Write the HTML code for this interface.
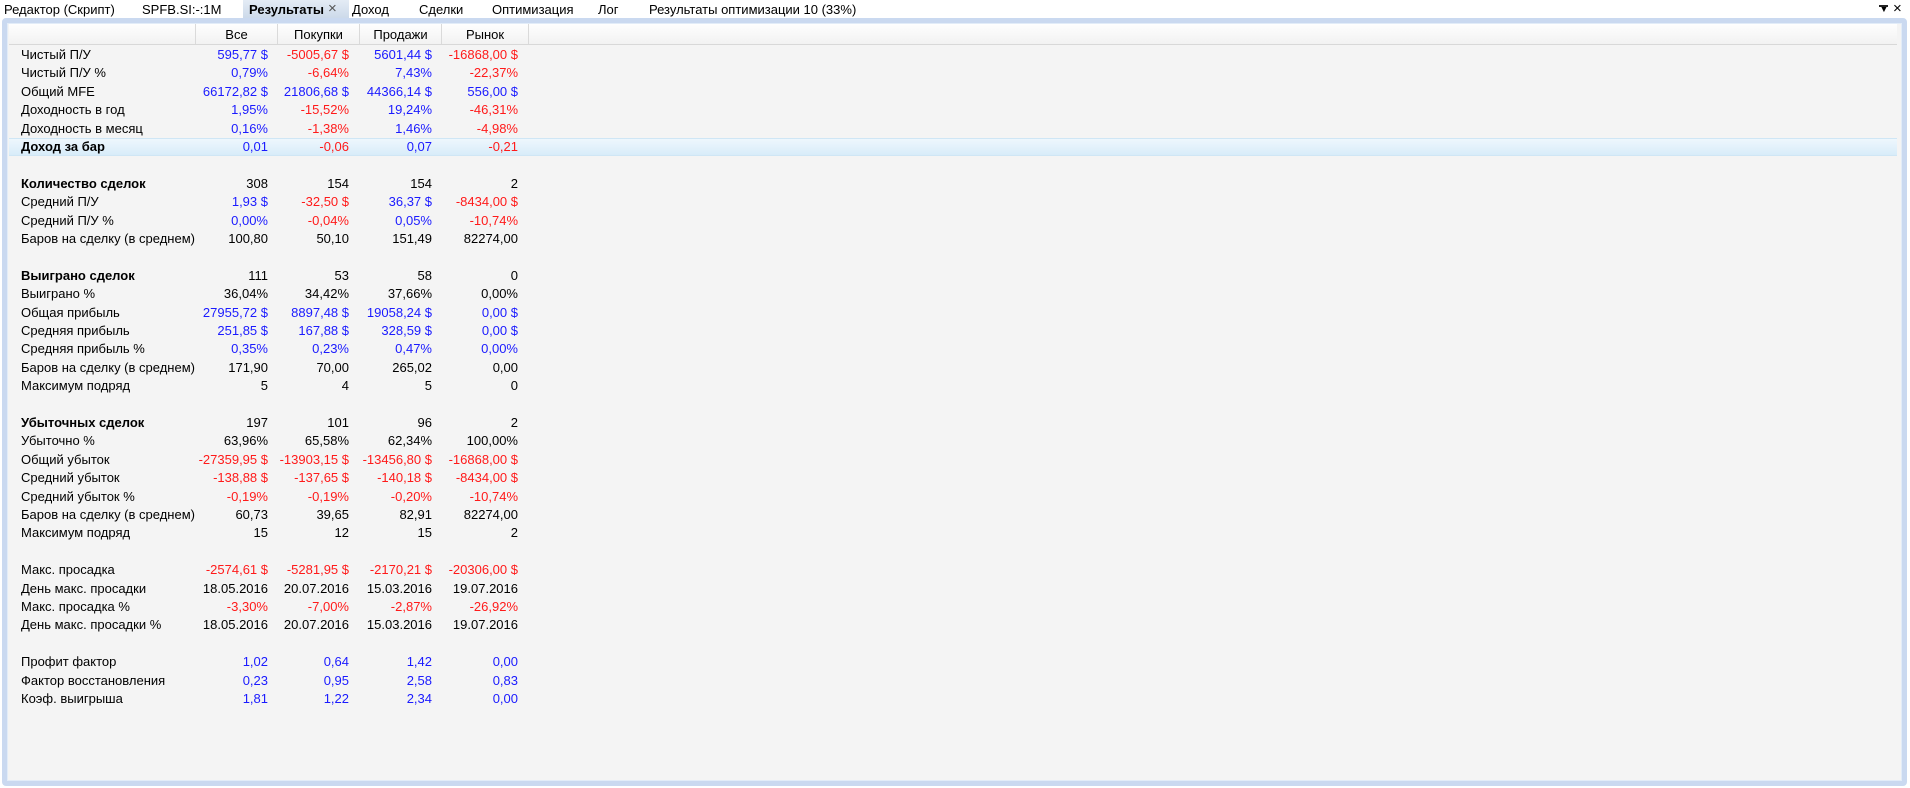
<!DOCTYPE html>
<html><head><meta charset="utf-8"><style>
*{margin:0;padding:0;box-sizing:border-box}
body{width:1910px;height:788px;background:#fff;font-family:"Liberation Sans","DejaVu Sans",sans-serif;font-size:13px;color:#000;position:relative;overflow:hidden}
.tab{position:absolute;top:2px;font-size:13px;white-space:nowrap}
.act{position:absolute;left:243px;top:0;width:106px;height:19px;background:linear-gradient(#e4ecf5,#cbd9e9);}
.frame{position:absolute;left:2px;top:18px;width:1905px;height:768px;border:5px solid #cad9f0;border-radius:4px;background:#f4f4f4;box-shadow:inset 0 0 0 1px #e2ecf8}
.hdr{position:absolute;left:9px;top:24px;width:1888px;height:21px;background:linear-gradient(#fefefe,#f2f2f2);border-bottom:1px solid #d8d8d8}
.hd{position:absolute;top:0;height:20px;border-left:1px solid #dadada;text-align:center;line-height:22px}
.row{position:absolute;left:0;width:1900px;height:18.4px;line-height:18px}
.l{position:absolute;left:21px}
.v{position:absolute;text-align:right;width:80px}
.c1{left:188px}.c2{left:269px}.c3{left:352px}.c4{left:438px}
.b{color:#1a1aff}.r{color:#ff1a1a}
.hl{position:absolute;left:9px;top:138px;width:1888px;height:18px;background:linear-gradient(#eef7fd,#d8ecf9);border-top:1px solid #cfe6f5;border-bottom:1px solid #cfe6f5}
</style></head><body>
<div class="act"></div>
<div class="tab" style="left:4px">Редактор (Скрипт)</div>
<div class="tab" style="left:142px">SPFB.SI:-:1M</div>
<div class="tab" style="left:249px;font-weight:bold">Результаты</div>
<div class="tab" style="left:328px;color:#555;font-size:15px;top:0">×</div>
<div class="tab" style="left:352px">Доход</div>
<div class="tab" style="left:419px">Сделки</div>
<div class="tab" style="left:492px">Оптимизация</div>
<div class="tab" style="left:598px">Лог</div>
<div class="tab" style="left:649px">Результаты оптимизации 10 (33%)</div>
<div class="tab" style="left:1878px;top:1px;font-size:12px">&#9660;</div>
<div style="position:absolute;left:1879px;top:5px;width:9px;height:2px;background:#222"></div>
<div class="tab" style="left:1893px;top:0;font-size:15px">×</div>
<div class="frame"></div>
<div class="hdr">
<div class="hd" style="left:186px;width:82px">Все</div>
<div class="hd" style="left:268px;width:82px">Покупки</div>
<div class="hd" style="left:350px;width:82px">Продажи</div>
<div class="hd" style="left:432px;width:87px">Рынок</div>
<div class="hd" style="left:519px;width:1px"></div>
</div>
<div class="hl"></div>
<div style="position:absolute;left:0;top:2px">
<div class="row" style="top:44px"><span class="l">Чистый П/У</span><span class="v c1 b">595,77 $</span><span class="v c2 r">-5005,67 $</span><span class="v c3 b">5601,44 $</span><span class="v c4 r">-16868,00 $</span></div>
<div class="row" style="top:62.4px"><span class="l">Чистый П/У %</span><span class="v c1 b">0,79%</span><span class="v c2 r">-6,64%</span><span class="v c3 b">7,43%</span><span class="v c4 r">-22,37%</span></div>
<div class="row" style="top:80.8px"><span class="l">Общий MFE</span><span class="v c1 b">66172,82 $</span><span class="v c2 b">21806,68 $</span><span class="v c3 b">44366,14 $</span><span class="v c4 b">556,00 $</span></div>
<div class="row" style="top:99.2px"><span class="l">Доходность в год</span><span class="v c1 b">1,95%</span><span class="v c2 r">-15,52%</span><span class="v c3 b">19,24%</span><span class="v c4 r">-46,31%</span></div>
<div class="row" style="top:117.6px"><span class="l">Доходность в месяц</span><span class="v c1 b">0,16%</span><span class="v c2 r">-1,38%</span><span class="v c3 b">1,46%</span><span class="v c4 r">-4,98%</span></div>
<div class="row" style="top:136px"><span class="l" style="font-weight:bold">Доход за бар</span><span class="v c1 b">0,01</span><span class="v c2 r">-0,06</span><span class="v c3 b">0,07</span><span class="v c4 r">-0,21</span></div>
<div class="row" style="top:172.8px"><span class="l" style="font-weight:bold">Количество сделок</span><span class="v c1">308</span><span class="v c2">154</span><span class="v c3">154</span><span class="v c4">2</span></div>
<div class="row" style="top:191.2px"><span class="l">Средний П/У</span><span class="v c1 b">1,93 $</span><span class="v c2 r">-32,50 $</span><span class="v c3 b">36,37 $</span><span class="v c4 r">-8434,00 $</span></div>
<div class="row" style="top:209.6px"><span class="l">Средний П/У %</span><span class="v c1 b">0,00%</span><span class="v c2 r">-0,04%</span><span class="v c3 b">0,05%</span><span class="v c4 r">-10,74%</span></div>
<div class="row" style="top:228px"><span class="l">Баров на сделку (в среднем)</span><span class="v c1">100,80</span><span class="v c2">50,10</span><span class="v c3">151,49</span><span class="v c4">82274,00</span></div>
<div class="row" style="top:264.8px"><span class="l" style="font-weight:bold">Выиграно сделок</span><span class="v c1">111</span><span class="v c2">53</span><span class="v c3">58</span><span class="v c4">0</span></div>
<div class="row" style="top:283.2px"><span class="l">Выиграно %</span><span class="v c1">36,04%</span><span class="v c2">34,42%</span><span class="v c3">37,66%</span><span class="v c4">0,00%</span></div>
<div class="row" style="top:301.6px"><span class="l">Общая прибыль</span><span class="v c1 b">27955,72 $</span><span class="v c2 b">8897,48 $</span><span class="v c3 b">19058,24 $</span><span class="v c4 b">0,00 $</span></div>
<div class="row" style="top:320px"><span class="l">Средняя прибыль</span><span class="v c1 b">251,85 $</span><span class="v c2 b">167,88 $</span><span class="v c3 b">328,59 $</span><span class="v c4 b">0,00 $</span></div>
<div class="row" style="top:338.4px"><span class="l">Средняя прибыль %</span><span class="v c1 b">0,35%</span><span class="v c2 b">0,23%</span><span class="v c3 b">0,47%</span><span class="v c4 b">0,00%</span></div>
<div class="row" style="top:356.8px"><span class="l">Баров на сделку (в среднем)</span><span class="v c1">171,90</span><span class="v c2">70,00</span><span class="v c3">265,02</span><span class="v c4">0,00</span></div>
<div class="row" style="top:375.2px"><span class="l">Максимум подряд</span><span class="v c1">5</span><span class="v c2">4</span><span class="v c3">5</span><span class="v c4">0</span></div>
<div class="row" style="top:412px"><span class="l" style="font-weight:bold">Убыточных сделок</span><span class="v c1">197</span><span class="v c2">101</span><span class="v c3">96</span><span class="v c4">2</span></div>
<div class="row" style="top:430.4px"><span class="l">Убыточно %</span><span class="v c1">63,96%</span><span class="v c2">65,58%</span><span class="v c3">62,34%</span><span class="v c4">100,00%</span></div>
<div class="row" style="top:448.8px"><span class="l">Общий убыток</span><span class="v c1 r">-27359,95 $</span><span class="v c2 r">-13903,15 $</span><span class="v c3 r">-13456,80 $</span><span class="v c4 r">-16868,00 $</span></div>
<div class="row" style="top:467.2px"><span class="l">Средний убыток</span><span class="v c1 r">-138,88 $</span><span class="v c2 r">-137,65 $</span><span class="v c3 r">-140,18 $</span><span class="v c4 r">-8434,00 $</span></div>
<div class="row" style="top:485.6px"><span class="l">Средний убыток %</span><span class="v c1 r">-0,19%</span><span class="v c2 r">-0,19%</span><span class="v c3 r">-0,20%</span><span class="v c4 r">-10,74%</span></div>
<div class="row" style="top:504px"><span class="l">Баров на сделку (в среднем)</span><span class="v c1">60,73</span><span class="v c2">39,65</span><span class="v c3">82,91</span><span class="v c4">82274,00</span></div>
<div class="row" style="top:522.4px"><span class="l">Максимум подряд</span><span class="v c1">15</span><span class="v c2">12</span><span class="v c3">15</span><span class="v c4">2</span></div>
<div class="row" style="top:559.2px"><span class="l">Макс. просадка</span><span class="v c1 r">-2574,61 $</span><span class="v c2 r">-5281,95 $</span><span class="v c3 r">-2170,21 $</span><span class="v c4 r">-20306,00 $</span></div>
<div class="row" style="top:577.6px"><span class="l">День макс. просадки</span><span class="v c1">18.05.2016</span><span class="v c2">20.07.2016</span><span class="v c3">15.03.2016</span><span class="v c4">19.07.2016</span></div>
<div class="row" style="top:596px"><span class="l">Макс. просадка %</span><span class="v c1 r">-3,30%</span><span class="v c2 r">-7,00%</span><span class="v c3 r">-2,87%</span><span class="v c4 r">-26,92%</span></div>
<div class="row" style="top:614.4px"><span class="l">День макс. просадки %</span><span class="v c1">18.05.2016</span><span class="v c2">20.07.2016</span><span class="v c3">15.03.2016</span><span class="v c4">19.07.2016</span></div>
<div class="row" style="top:651.2px"><span class="l">Профит фактор</span><span class="v c1 b">1,02</span><span class="v c2 b">0,64</span><span class="v c3 b">1,42</span><span class="v c4 b">0,00</span></div>
<div class="row" style="top:669.6px"><span class="l">Фактор восстановления</span><span class="v c1 b">0,23</span><span class="v c2 b">0,95</span><span class="v c3 b">2,58</span><span class="v c4 b">0,83</span></div>
<div class="row" style="top:688px"><span class="l">Коэф. выигрыша</span><span class="v c1 b">1,81</span><span class="v c2 b">1,22</span><span class="v c3 b">2,34</span><span class="v c4 b">0,00</span></div>
</div>
</body></html>
